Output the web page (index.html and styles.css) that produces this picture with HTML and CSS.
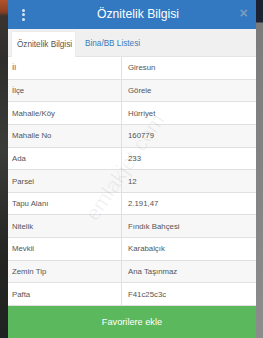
FILE: index.html
```html
<!DOCTYPE html>
<html lang="tr">
<head>
<meta charset="utf-8">
<link rel="stylesheet" href="styles.css">
</head>
<body>
<div class="screen">
  <div class="side-left"></div>
  <div class="modal">
    <div class="header">
      <div class="menu"><span></span><span></span><span></span></div>
      <div class="title">Öznitelik Bilgisi</div>
      <div class="close">×</div>
    </div>
    <div class="tabs">
      <div class="tab active">Öznitelik Bilgisi</div>
      <div class="tab link">Bina/BB Listesi</div>
    </div>
    <div class="table">
      <div class="row"><div class="k">İl</div><div class="v">Giresun</div></div>
      <div class="row alt"><div class="k">İlçe</div><div class="v">Görele</div></div>
      <div class="row"><div class="k">Mahalle/Köy</div><div class="v">Hürriyet</div></div>
      <div class="row alt"><div class="k">Mahalle No</div><div class="v">160779</div></div>
      <div class="row"><div class="k">Ada</div><div class="v">233</div></div>
      <div class="row alt"><div class="k">Parsel</div><div class="v">12</div></div>
      <div class="row"><div class="k">Tapu Alanı</div><div class="v">2.191,47</div></div>
      <div class="row alt"><div class="k">Nitelik</div><div class="v">Fındık Bahçesi</div></div>
      <div class="row"><div class="k">Mevkii</div><div class="v">Karabalçık</div></div>
      <div class="row alt"><div class="k">Zemin Tip</div><div class="v">Ana Taşınmaz</div></div>
      <div class="row"><div class="k">Pafta</div><div class="v">F41c25c3c</div></div>
      <div class="watermark">emlakjet.com</div>
    </div>
    <div class="button">Favorilere ekle</div>
  </div>
  <div class="side-right"></div>
</div>
</body>
</html>
```
FILE: styles.css
```css
html, body {
  margin: 0;
  padding: 0;
  width: 263px;
  height: 338px;
  overflow: hidden;
  background: #2a2a2a;
  font-family: "Liberation Sans", Arial, sans-serif;
}
.screen {
  display: flex;
  width: 263px;
  height: 338px;
}
.side-left {
  width: 8px;
  flex: none;
  background: linear-gradient(to bottom, #b2522a 0px, #8a3f22 12px, #3a3430 16px, #2e2e2c 60px, #3b3b38 150px, #262624 250px, #1e2220 338px);
}
.side-right {
  width: 7px;
  flex: none;
  background: linear-gradient(to bottom, #1c2232 0px, #1c2232 22px, #7b7b7b 23px, #8c8c8c 338px);
}
.modal {
  width: 248px;
  flex: none;
  display: flex;
  flex-direction: column;
  background: #fff;
}
.header {
  height: 29px;
  background: #3379c1;
  display: flex;
  align-items: center;
}
.menu {
  width: 31px;
  display: flex;
  flex-direction: column;
  align-items: center;
  gap: 1.5px;
}
.menu span {
  width: 3px;
  height: 3px;
  border-radius: 50%;
  background: #d8e6f4;
}
.title {
  flex: 1;
  text-align: center;
  color: #fff;
  font-size: 12.2px;
  margin-top: -1px;
  padding-left: 6px;
}
.close {
  width: 25px;
  text-align: center;
  color: #7d9cbd;
  font-size: 14px;
  font-weight: bold;
  margin-top: -3px;
}
.tabs {
  height: 28px;
  box-sizing: border-box;
  background: #f0f0f0;
  border-bottom: 1px solid #e4e4e4;
  display: flex;
  align-items: flex-end;
  padding-left: 3px;
}
.tab {
  font-size: 8.2px;
  height: 25px;
  box-sizing: border-box;
  display: flex;
  align-items: center;
  padding: 0 5px;
}
.tab.active {
  background: #fff;
  color: #555;
  border: 1px solid #ececec;
  border-bottom: none;
  margin-bottom: -1px;
  height: 26px;
  width: 65px;
  padding: 0 0 0 5px;
}
.tab.link {
  color: #3a7ab8;
  padding-left: 9px;
}
.table {
  position: relative;
  overflow: hidden;
  flex: none;
}
.row {
  display: grid;
  grid-template-columns: 114px 1fr;
  height: 22.65px;
  box-sizing: border-box;
  border-bottom: 1px solid #e0e0e0;
  background: #fff;
  font-size: 7.8px;
  color: #555;
}
.row.alt {
  background: #f7f7f7;
}
.row:last-child {
  border-bottom: none;
}
.k, .v {
  display: flex;
  align-items: center;
}
.k {
  padding-left: 4px;
  border-right: 1px solid #e0e0e0;
}
.v {
  padding-left: 6px;
}
.watermark {
  position: absolute;
  left: 55px;
  top: 98px;
  width: 124px;
  text-align: center;
  font-size: 21px;
  line-height: 24px;
  color: rgba(0, 0, 0, 0.06);
  transform: rotate(-56deg);
  transform-origin: center;
  pointer-events: none;
}
.button {
  flex: 1;
  background: #5cb85c;
  color: #fff;
  font-size: 9.2px;
  display: flex;
  align-items: center;
  justify-content: center;
  padding-bottom: 1px;
}
```
